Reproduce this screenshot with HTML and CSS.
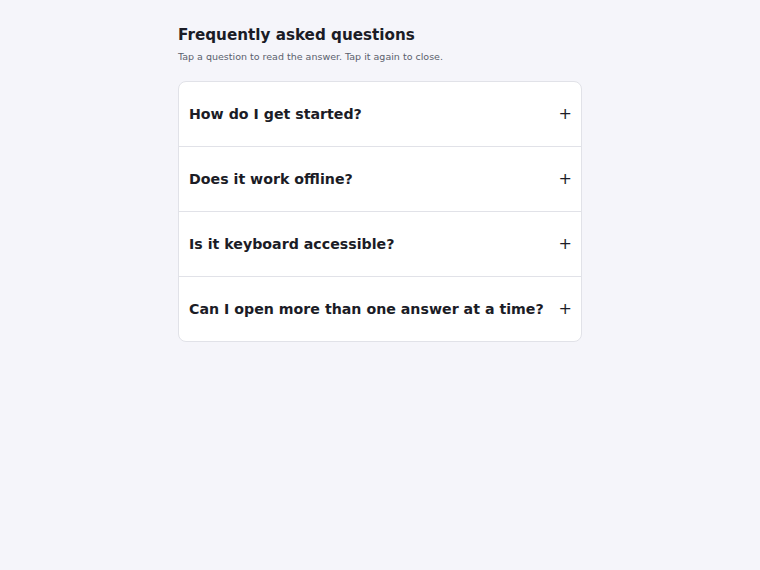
FILE: index.html
```html
<!DOCTYPE html>
<html lang="en">
  <head>
    <meta charset="UTF-8" />
    <title>FAQ</title>
    <link rel="stylesheet" href="styles.css">
  </head>
  <body>
    <main class="faq">
      <h1>Frequently asked questions</h1>
      <p class="hint">Tap a question to read the answer. Tap it again to close.</p>

      <div class="list">
        <div class="item">
          <button class="question">
            <span>How do I get started?</span>
            <span class="sign">+</span>
          </button>
        </div>
        <div class="item">
          <button class="question">
            <span>Does it work offline?</span>
            <span class="sign">+</span>
          </button>
        </div>
        <div class="item">
          <button class="question">
            <span>Is it keyboard accessible?</span>
            <span class="sign">+</span>
          </button>
        </div>
        <div class="item">
          <button class="question">
            <span>Can I open more than one answer at a time?</span>
            <span class="sign">+</span>
          </button>
        </div>
      </div>
    </main>
  </body>
</html>
```

FILE: styles.css
```css
body {
  margin: 0;
  background: #f5f5fa;
  color: #1b1c26;
  font-family: "DejaVu Sans", sans-serif;
}

.faq {
  width: 404px;
  margin: 0 auto;
  padding-top: 25px;
}

.faq h1 {
  font-size: 15.2px;
  line-height: 20px;
  margin: 0;
}

.hint {
  font-size: 9.5px;
  line-height: 12px;
  color: #5b5f6d;
  margin: 6px 0 18px;
}

.list {
  background: white;
  border: 1px solid #e1e2e8;
  border-radius: 8px;
  overflow: hidden;
}

.item + .item {
  border-top: 1px solid #e1e2e8;
}

.question {
  width: 100%;
  display: flex;
  justify-content: space-between;
  align-items: center;
  gap: 4px;
  padding: 22px 9px 22px 10px;
  border: none;
  background: transparent;
  font-family: inherit;
  font-size: 14.2px;
  font-weight: bold;
  line-height: 20px;
  color: inherit;
  text-align: left;
  cursor: pointer;
}

.sign {
  flex-shrink: 0;
  font-weight: normal;
  font-size: 16px;
}
```
